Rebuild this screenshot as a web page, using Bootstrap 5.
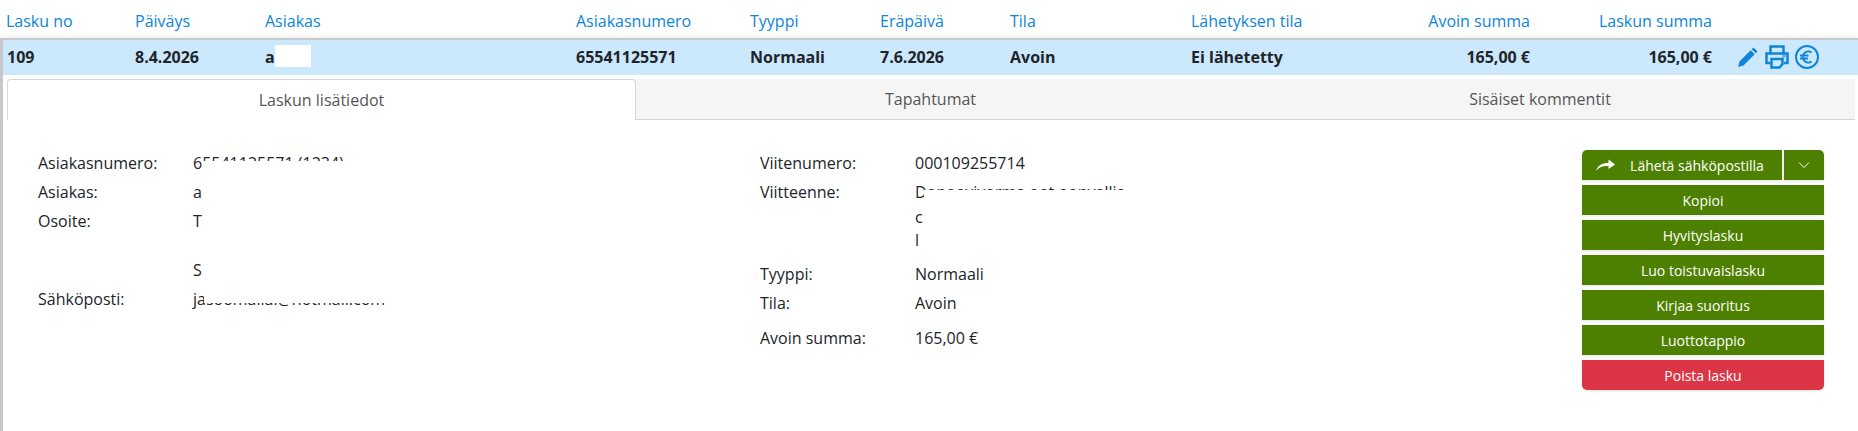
<!DOCTYPE html>
<html lang="fi">
<head>
<meta charset="utf-8">
<title>Lasku</title>
<link href="https://cdn.jsdelivr.net/npm/bootstrap@5.3.0/dist/css/bootstrap.min.css" rel="stylesheet">
<style>
html,body{height:431px;overflow:hidden;background:#fff}
body{font-family:"Open Sans",sans-serif;font-size:16px;color:#212529}
.inv-cols{display:grid;align-items:center}
.inv-head{height:38px;color:#0d85d8;padding:4px 0 0 6px;grid-template-columns:129px 130px 311px 174px 130px 130px 181px 339px 182px 1fr}
.inv-row{height:35px;background:#cbe8fd;font-weight:700;padding:0 0 2px 4px;grid-template-columns:128px 130px 311px 174px 130px 130px 181px 339px 182px 1fr}
.inv-panel{border-left:3px solid #c8c8c8;border-top:2px solid #c8c8c8;box-shadow:0 -2px 3px rgba(0,0,0,.06);height:393px}
.inv-icons{padding:0 0 0 25px;color:#0d85d8;gap:6px}
.inv-mask{position:relative}
.inv-mask i{position:absolute;background:#fff;display:block}
.inv-mask .mask-name{left:10px;top:0;width:36px;height:22px}
.inv-mask .mask-num{left:10px;top:9px;width:180px;height:15px}
.inv-mask .mask-mail{left:11px;top:-2px;width:200px;height:17px}
.inv-mask .mask-ref{left:9px;top:10px;width:210px;height:15px}
.tab-strip{margin:4px 0 0 4px;height:41px;flex-wrap:nowrap;border:0}
.tab-item{background:#f5f5f5;border-bottom:1px solid #d5d5d5;color:#555;display:flex;align-items:center;justify-content:center;height:41px}
.tab-a{flex:0 0 629px;background:#fff;border:1px solid #d5d5d5;border-bottom:0;border-radius:4px 4px 0 0}
.tab-b{flex:0 0 589px}
.tab-c{flex:0 0 630px}
.inv-body{padding:32px 34px 0 35px}
.info-col{width:722px}
.info-line{display:grid;grid-template-columns:155px 1fr;line-height:22px;margin-bottom:7px}
.info-pre{margin-bottom:13px}
.info-ref{margin-bottom:10px}
.info-stack{line-height:25px;margin-top:-1px}
.info-last{margin-top:-2px}
.info-gap{height:14px}
.act-col{width:242px;margin-left:auto;margin-top:-2px;gap:5px}
.act-btn{height:30px;background:#4d8000;border:0;color:#fff;font-size:14px;padding:0;border-radius:0;box-shadow:0 1px 3px rgba(0,0,0,.12);display:flex;align-items:center;justify-content:center;width:100%}
.act-btn:hover{background:#4d8000;color:#fff}
.act-del{background:#dc3545;border-radius:0 0 5px 5px}
.act-del:hover{background:#dc3545}
.act-main{flex:0 0 200px;width:200px;border-radius:5px 0 0 0;position:relative;padding-left:30px}
.act-main svg{position:absolute;left:14px;top:8px}
.act-drop{flex:0 0 40px;width:40px;border-radius:0 5px 0 0}
</style>
</head>
<body>
<div class="inv-cols inv-head">
  <div>Lasku no</div><div>Päiväys</div><div>Asiakas</div><div>Asiakasnumero</div><div>Tyyppi</div><div>Eräpäivä</div><div>Tila</div>
  <div class="d-flex justify-content-between"><span>Lähetyksen tila</span><span>Avoin summa</span></div>
  <div class="text-end">Laskun summa</div><div></div>
</div>
<div class="inv-panel">
  <div class="inv-row inv-cols">
    <div>109</div><div>8.4.2026</div>
    <div class="inv-mask">a<i class="mask-name"></i></div>
    <div>65541125571</div><div>Normaali</div><div>7.6.2026</div><div>Avoin</div>
    <div class="d-flex justify-content-between"><span>Ei lähetetty</span><span>165,00 €</span></div>
    <div class="text-end">165,00 €</div>
    <div class="d-flex align-items-center inv-icons">
      <svg width="22" height="22" viewBox="0 0 22 22" fill="#0d85d8"><path d="M16.500 1.500 20.500 5.500 18.700 7.300 14.700 3.300ZM13.700 4.300 17.700 8.300 6.500 19.500 1 21 2.500 15.500Z"/></svg>
      <svg width="24" height="24" viewBox="0 0 24 24" fill="none" stroke="#0d85d8" stroke-width="2.500"><path d="M5.500 8V1.500H18.500V8"/><path d="M5.500 18H1.500V8.500H22.500V18H19"/><path d="M6.500 14H17.500V19L14.500 22.500H6.500Z"/><circle cx="19" cy="11" r=".4"/></svg>
      <svg width="24" height="24" viewBox="0 0 24 24" fill="none" stroke="#0d85d8" stroke-width="2"><circle cx="12" cy="12" r="11"/><path d="M16.500 7.500A5.500 5.500 0 1 0 16.500 16.500"/><path d="M5 10.500H13.500M5 13.500H13"/></svg>
    </div>
  </div>
  <div class="d-flex tab-strip">
    <div class="tab-item tab-a">Laskun lisätiedot</div>
    <div class="tab-item tab-b">Tapahtumat</div>
    <div class="tab-item tab-c">Sisäiset kommentit</div>
  </div>
  <div class="d-flex inv-body">
    <div class="info-col">
      <div class="info-line"><span>Asiakasnumero:</span><span class="inv-mask">65541125571 (1234)<i class="mask-num"></i></span></div>
      <div class="info-line"><span>Asiakas:</span><span>a</span></div>
      <div class="info-line info-pre"><span>Osoite:</span><span>T</span></div>
      <div class="info-gap"></div>
      <div class="info-line"><span></span><span>S</span></div>
      <div class="info-line"><span>Sähköposti:</span><span class="inv-mask">jasoomailal@hotmail.com<i class="mask-mail"></i></span></div>
    </div>
    <div class="info-col">
      <div class="info-line"><span>Viitenumero:</span><span>000109255714</span></div>
      <div class="info-line info-ref"><span>Viitteenne:</span>
        <div class="info-stack">
          <div class="inv-mask">Dopoovivorma oot oonvallia<i class="mask-ref"></i></div>
          <div>c</div><div class="info-last">l</div>
        </div>
      </div>
      <div class="info-line"><span>Tyyppi:</span><span>Normaali</span></div>
      <div class="info-line info-pre"><span>Tila:</span><span>Avoin</span></div>
      <div class="info-line"><span>Avoin summa:</span><span>165,00 €</span></div>
    </div>
    <div class="act-col d-flex flex-column">
      <div class="d-flex justify-content-between">
        <button type="button" class="btn act-btn act-main">
          <svg width="20" height="14" viewBox="0 0 20 14"><path fill="#fff" d="M0 13C1.500 7.500 6 5 12.500 5V1.500L19 6.500 12.500 11V8C7 7.500 3 9 0 13Z"/></svg>
          Lähetä sähköpostilla</button>
        <button type="button" class="btn act-btn act-drop" aria-label="Lisää">
          <svg width="12" height="8" viewBox="0 0 12 8"><path fill="none" stroke="#fff" d="M1 1.500 6 6.500 11 1.500"/></svg>
        </button>
      </div>
      <button type="button" class="btn act-btn">Kopioi</button>
      <button type="button" class="btn act-btn">Hyvityslasku</button>
      <button type="button" class="btn act-btn">Luo toistuvaislasku</button>
      <button type="button" class="btn act-btn">Kirjaa suoritus</button>
      <button type="button" class="btn act-btn">Luottotappio</button>
      <button type="button" class="btn act-btn act-del">Poista lasku</button>
    </div>
  </div>
</div>
</body>
</html>
